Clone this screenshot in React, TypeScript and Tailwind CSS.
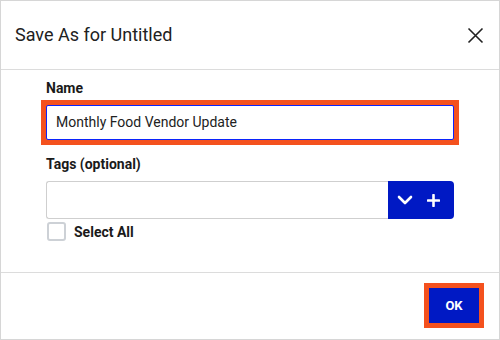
import React from "react";

export default function App() {
  return (
    <div
      className="w-[500px] h-[340px] bg-white border border-[#d6d6d6] flex flex-col text-[#1f1f1f]"
      style={{ fontFamily: "Roboto, 'Liberation Sans', sans-serif" }}
    >
      <div className="h-[69px] flex items-center justify-between pl-[14px] pr-[15px] border-b border-[#dcdcdc] shrink-0">
        <div className="text-[18px] leading-[22px] text-[#212121]">Save As for Untitled</div>
        <svg width="17" height="17" viewBox="0 0 17 17">
          <path d="M1.5 1.5 L15.5 15.5 M15.5 1.5 L1.5 15.5" stroke="#222" strokeWidth="1.6" fill="none" />
        </svg>
      </div>
      <div className="flex-1 pl-[40px] pt-[10px] flex flex-col">
        <div className="pl-[5px] text-[14px] leading-[16px] font-bold text-[#1a1a1a]">Name</div>
        <div className="mt-[4px] w-[418px] bg-[#f4511e] p-[5px]">
          <div className="h-[35px] border border-[#0b24fb] rounded-[2px] bg-white flex items-center pl-[9px] text-[14px] text-[#222]">
            Monthly Food Vendor Update
          </div>
        </div>
        <div className="mt-[11px] pl-[5px] text-[14px] leading-[16px] font-bold text-[#1a1a1a]">Tags (optional)</div>
        <div className="mt-[9px] ml-[5px] w-[408px] h-[38px] flex">
          <div className="flex-1 border border-[#cfcfcf] border-r-0 rounded-l-[3px] bg-white" />
          <div className="w-[66px] bg-[#0019c4] rounded-r-[4px] flex items-center pl-[9px] gap-[14px]">
            <svg width="16" height="10" viewBox="0 0 16 10">
              <path d="M2 2 L8 8 L14 2" stroke="white" strokeWidth="2.6" fill="none" strokeLinecap="round" strokeLinejoin="round" />
            </svg>
            <svg width="13" height="13" viewBox="0 0 13 13">
              <path d="M6.5 1 V12 M1 6.5 H12" stroke="white" strokeWidth="2.6" fill="none" strokeLinecap="round" />
            </svg>
          </div>
        </div>
        <div className="mt-[3px] ml-[6px] flex items-center">
          <div className="w-[19px] h-[19px] border-2 border-[#cdd1d6] rounded-[3px] bg-white" />
          <span className="ml-[8px] text-[14px] leading-[16px] font-bold text-[#1a1a1a]">Select All</span>
        </div>
      </div>
      <div className="h-[67px] border-t border-[#dcdcdc] shrink-0 flex justify-end items-start pt-[10px] pr-[15px]">
        <div className="bg-[#f4511e] p-[5px]">
          <div className="w-[50px] h-[35px] bg-[#0019c4] flex items-center justify-center text-white font-bold text-[13px]">
            OK
          </div>
        </div>
      </div>
    </div>
  );
}
